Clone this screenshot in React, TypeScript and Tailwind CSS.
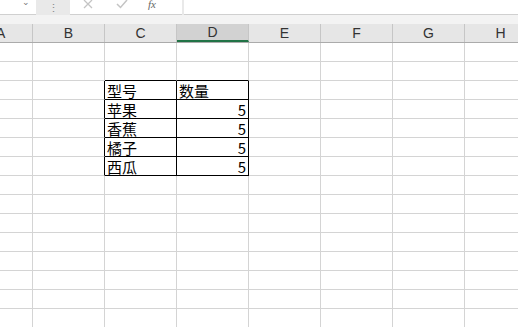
import React from "react";

const cols = ["A", "B", "C", "D", "E", "F", "G", "H"];
const widths = [33, 72, 72, 72, 72, 72, 72, 72];

const table: Record<number, [string, string]> = {
  2: ["型号", "数量"],
  3: ["苹果", "5"],
  4: ["香蕉", "5"],
  5: ["橘子", "5"],
  6: ["西瓜", "5"],
};

const font = { fontFamily: '"Noto Sans CJK SC", "Noto Sans", sans-serif' };

function Cell({ row, col }: { row: number; col: number }) {
  const inTable = table[row] !== undefined && (col === 2 || col === 3);
  const rightBlack = table[row] !== undefined && (col === 1 || col === 2 || col === 3);
  const bottomBlack = (col === 2 || col === 3) && (row === 1 || table[row] !== undefined);
  const text = inTable ? table[row][col - 2] : "";
  const isNum = inTable && col === 3 && row > 2;
  return (
    <div
      className={[
        "h-[19px] shrink-0 border-r border-b flex items-center text-[15px] leading-none text-black px-[2px]",
        rightBlack ? "border-r-black" : "border-r-[#d4d4d4]",
        bottomBlack ? "border-b-black" : "border-b-[#d4d4d4]",
        isNum ? "justify-end" : "justify-start",
      ].join(" ")}
      style={{ width: widths[col] }}
    >
      {text}
    </div>
  );
}

export default function App() {
  const rows = Array.from({ length: 15 }, (_, i) => i);
  return (
    <div className="w-[518px] h-[327px] overflow-hidden bg-white" style={font}>
      <div className="h-[15px] flex bg-[#e9e9e9]">
        <div className="w-[36px] bg-white border-b border-[#d0d0d0] flex items-start justify-end pr-[6px]">
          <span className="text-[9px] leading-none text-[#777] -mt-[3px]">⌄</span>
        </div>
        <div className="w-[34px] flex items-center justify-center text-[#888] text-[11px] leading-none">⋮</div>
        <div className="w-[112px] bg-white border-b border-[#d0d0d0] flex items-center">
          <svg width="10" height="10" viewBox="0 0 10 10" className="ml-[13px] -mt-[6px]">
            <path d="M1 1L9 9M9 1L1 9" stroke="#c4c4c4" strokeWidth="1.3" fill="none" />
          </svg>
          <svg width="12" height="10" viewBox="0 0 12 10" className="ml-[23px] -mt-[6px]">
            <path d="M1 5L4.5 8.5L11 1" stroke="#c4c4c4" strokeWidth="1.5" fill="none" />
          </svg>
          <span
            className="ml-[20px] -mt-[6px] text-[11px] italic text-[#666] leading-none"
            style={{ fontFamily: '"Liberation Serif", serif' }}
          >
            fx
          </span>
        </div>
        <div className="w-[2px]" />
        <div className="flex-1 bg-white border-b border-[#d0d0d0]" />
      </div>
      <div className="h-[9px] bg-[#f3f3f3]" />
      <div
        className="flex h-[19px] bg-[#e6e6e6] border-b border-[#ababab]"
        style={{ fontFamily: '"Liberation Sans", sans-serif' }}
      >
        {cols.map((c, i) => (
          <div
            key={c}
            className={[
              "h-full shrink-0 border-r border-[#c6c6c6] flex items-center text-[14px] text-[#333]",
              i === 0 ? "justify-start" : "justify-center",
              c === "D" ? "bg-[#d2d2d2] border-b-2 border-b-[#217346]" : "",
            ].join(" ")}
            style={{ width: widths[i] }}
          >
            {i === 0 ? <span className="-ml-[4px]">{c}</span> : c}
          </div>
        ))}
      </div>
      {rows.map((r) => (
        <div key={r} className="flex">
          {cols.map((c, i) => (
            <Cell key={c} row={r} col={i} />
          ))}
        </div>
      ))}
    </div>
  );
}
